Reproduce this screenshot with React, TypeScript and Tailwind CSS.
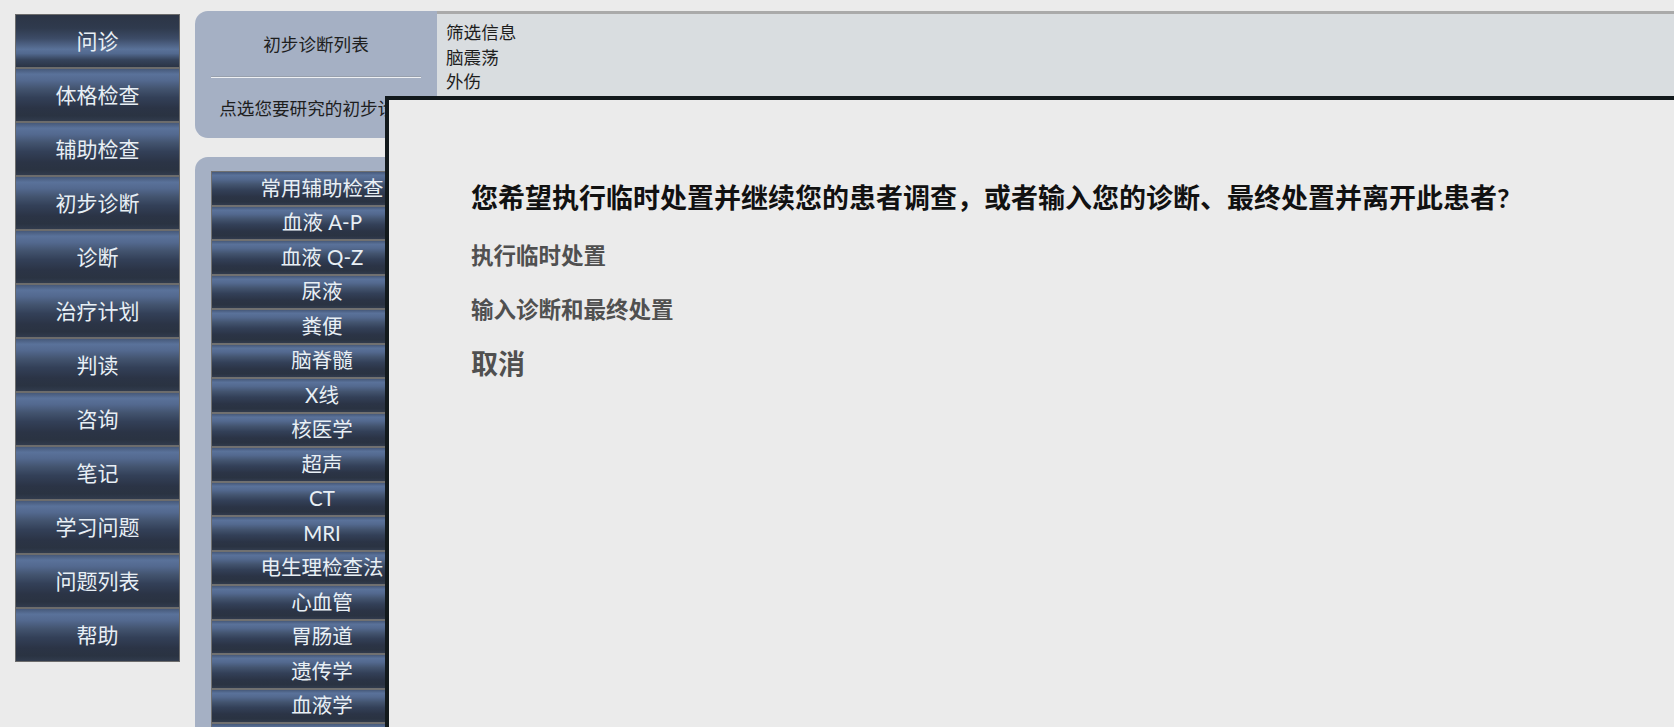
import React from "react";

const navItems = [
  "问诊",
  "体格检查",
  "辅助检查",
  "初步诊断",
  "诊断",
  "治疗计划",
  "判读",
  "咨询",
  "笔记",
  "学习问题",
  "问题列表",
  "帮助",
];

const testItems = [
  "常用辅助检查",
  "血液 A-P",
  "血液 Q-Z",
  "尿液",
  "粪便",
  "脑脊髓",
  "X线",
  "核医学",
  "超声",
  "CT",
  "MRI",
  "电生理检查法",
  "心血管",
  "胃肠道",
  "遗传学",
  "血液学",
  "免疫学",
];

const normalGrad =
  "bg-[linear-gradient(180deg,#46597a_0%,#5a729a_10%,#53698f_22%,#43546f_38%,#334058_55%,#2b3446_75%,#2a3342_90%,#313b4d_100%)]";
const activeGrad =
  "bg-[linear-gradient(180deg,#2c3546_0%,#2f3a4d_25%,#3c4b66_45%,#5a7299_66%,#52698f_74%,#36445c_86%,#2b3445_100%)]";

export default function App() {
  return (
    <div className="relative h-[727px] w-full overflow-hidden bg-[#ebebeb] font-['Lato','Noto_Sans_CJK_SC',sans-serif]">
      <div className="flex gap-[15px] pl-[15px] pt-[11px]">
        {/* Left navigation */}
        <div className="mt-[3px] flex w-[165px] shrink-0 flex-col">
          {navItems.map((item, i) => (
            <div
              key={item}
              className={`flex h-[54px] items-center justify-center border border-[#6c6c6c] text-[21px] text-[#e8eff5] ${
                i === 0 ? activeGrad : normalGrad
              }`}
            >
              {item}
            </div>
          ))}
        </div>

        {/* Main column */}
        <div className="flex flex-1 flex-col gap-[19px]">
          {/* Top panel */}
          <div className="flex h-[127px]">
            <div className="flex w-[242px] shrink-0 flex-col items-center rounded-l-[13px] bg-[#a5b0c4] px-[16px] pt-[22px] text-[17.6px] leading-[24px] text-[#1e1e1e]">
              <div>初步诊断列表</div>
              <div className="mt-[19px] h-[2px] w-full border-t border-[#98a0ad] bg-[#eef0f3]" />
              <div className="mt-[19px] whitespace-nowrap">点选您要研究的初步诊断</div>
            </div>
            <div className="flex-1 border-t-[3px] border-[#aaaaaa] bg-[#d9dde0] pl-[9px] pt-[7px] text-[17.6px] leading-[24.5px] text-[#1e1e1e]">
              <div>筛选信息</div>
              <div>脑震荡</div>
              <div>外伤</div>
              <div>头痛</div>
            </div>
          </div>

          {/* Second panel */}
          <div className="h-[700px] w-[400px] rounded-tl-[13px] bg-[#a5b0c4] pl-[16px] pt-[14px]">
            <div className="flex w-[222px] flex-col">
              {testItems.map((item) => (
                <div
                  key={item}
                  className={`flex h-[34.5px] items-center justify-center whitespace-nowrap border border-[#707070] text-[20.5px] text-[#e8eff5] ${normalGrad}`}
                >
                  {item}
                </div>
              ))}
            </div>
          </div>
        </div>
      </div>

      {/* Modal */}
      <div className="absolute left-[385px] top-[96px] h-[800px] w-[1400px] border-4 border-[#12191c] bg-[#ebebeb] pl-[82px] pt-[80px]">
        <div className="text-[27px] font-bold leading-[36px] text-[#111111]">
          您希望执行临时处置并继续您的患者调查，或者输入您的诊断、最终处置并离开此患者?
        </div>
        <div className="mt-[25px] text-[22.5px] font-bold leading-[30px] text-[#505050]">
          执行临时处置
        </div>
        <div className="mt-[24px] text-[22.5px] font-bold leading-[30px] text-[#505050]">
          输入诊断和最终处置
        </div>
        <div className="mt-[21px] text-[27px] font-bold leading-[36px] text-[#505050]">
          取消
        </div>
      </div>
    </div>
  );
}
